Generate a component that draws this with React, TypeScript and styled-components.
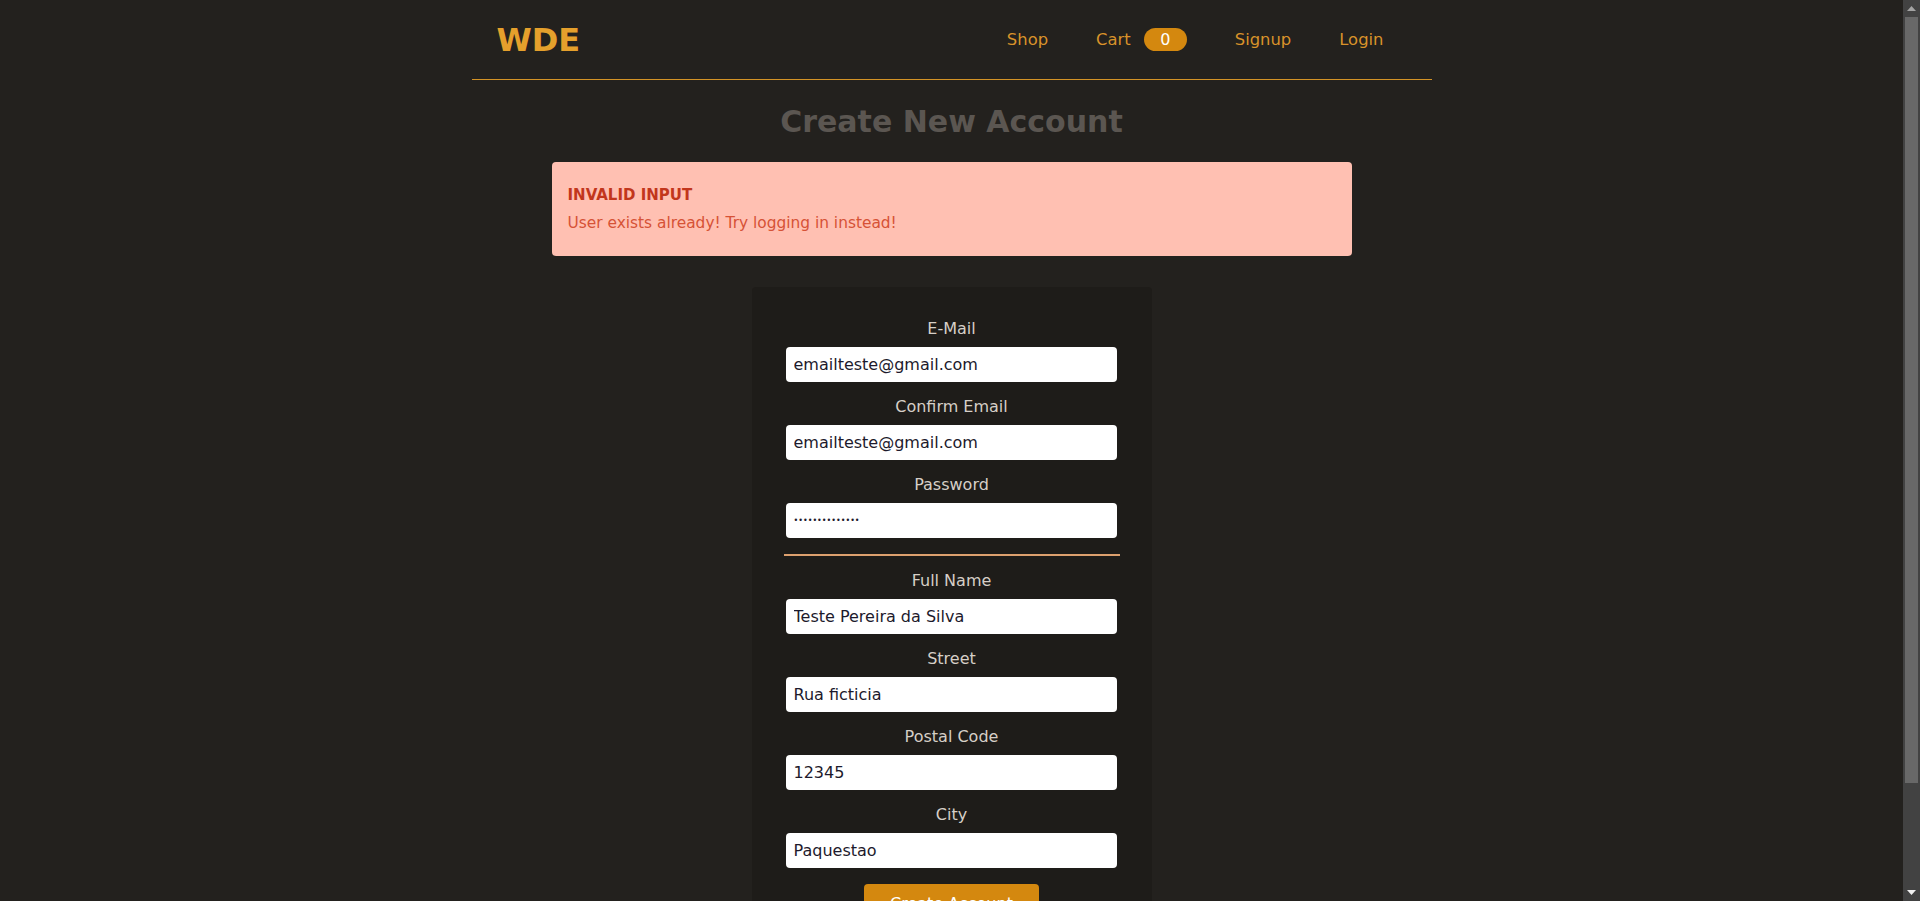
import React from "react";
import styled, { createGlobalStyle } from "styled-components";

const GlobalStyle = createGlobalStyle`
  html, body {
    margin: 0;
    height: 100%;
    overflow: hidden;
    background: #23211e;
  }
  body {
    font-family: "DejaVu Sans", "Liberation Sans", sans-serif;
  }
  #root { height: 100%; }
  * { box-sizing: border-box; }
`;

const Frame = styled.div`
  display: flex;
  height: 100vh;
  background: #23211e;
`;

const Viewport = styled.div`
  flex: 1;
  min-width: 0;
  overflow: hidden;
`;

const ScrollBar = styled.div`
  width: 17px;
  flex: 0 0 17px;
  display: flex;
  flex-direction: column;
  background: #424242;
`;

const ArrowButton = styled.div`
  height: 17px;
  flex: 0 0 17px;
  display: flex;
  align-items: center;
  justify-content: center;
`;

const Track = styled.div`
  flex: 1;
  padding: 0 2px;
`;

const Thumb = styled.div<{ $h: number }>`
  height: ${(p) => p.$h}px;
  background: #686868;
`;

const Page = styled.div`
  width: 960px;
  margin: 0 auto;
  padding-bottom: 73px;
`;

const Header = styled.header`
  height: 80px;
  display: flex;
  align-items: center;
  justify-content: space-between;
  padding: 0 48px 0 25px;
  border-bottom: 1px solid #d39326;
`;

const Logo = styled.a`
  font-size: 32px;
  font-weight: 700;
  color: #e5a02c;
  text-decoration: none;
  line-height: 1;
`;

const NavList = styled.ul`
  list-style: none;
  margin: 0;
  padding: 0;
  display: flex;
  align-items: center;
  gap: 48px;
`;

const NavItem = styled.li`
  display: flex;
  align-items: center;
  gap: 13px;
`;

const NavLink = styled.a`
  font-size: 16.4px;
  color: #d8922a;
  text-decoration: none;
`;

const Badge = styled.span`
  display: inline-flex;
  align-items: center;
  justify-content: center;
  width: 43px;
  height: 23px;
  border-radius: 12px;
  background: #d4880f;
  color: #ffffff;
  font-size: 16px;
`;

const Main = styled.main`
  display: flex;
  flex-direction: column;
  align-items: center;
`;

const Title = styled.h1`
  margin: 24px 0 0;
  font-size: 30px;
  line-height: 36px;
  font-weight: 700;
  color: #5b5651;
`;

const Alert = styled.div`
  width: 800px;
  margin-top: 22px;
  padding: 21px 16px 21px;
  background: #ffc0b2;
  border-radius: 4px;
`;

const AlertTitle = styled.h2`
  margin: 0 0 4px;
  font-size: 15px;
  line-height: 24px;
  font-weight: 700;
  color: #c2361c;
`;

const AlertText = styled.p`
  margin: 0;
  font-size: 15.4px;
  line-height: 24px;
  color: #d65236;
`;

const Form = styled.form`
  width: 400px;
  margin-top: 31px;
  padding: 30px 34px 29px;
  background: #1e1c19;
  border-radius: 4px;
  display: flex;
  flex-direction: column;
  align-items: center;
`;

const Field = styled.div`
  width: 100%;
  display: flex;
  flex-direction: column;
  align-items: stretch;
  margin-bottom: 13px;
`;

const Label = styled.label`
  text-align: center;
  font-size: 16px;
  line-height: 24px;
  margin-bottom: 6px;
  color: #d6cfc7;
`;

const Input = styled.input`
  width: 331px;
  height: 35px;
  padding: 0 8px;
  border: none;
  border-radius: 4px;
  background: #ffffff;
  color: #1d1a2c;
  font-family: "DejaVu Sans", "Liberation Sans", sans-serif;
  font-size: ${(p) => (p.type === "password" ? "8px" : "16px")};
  outline: none;
  color-scheme: light;
`;

const Divider = styled.hr`
  width: 336px;
  margin: 3px 0 13px;
  border: none;
  border-top: 2px solid #dda06e;
`;

const Button = styled.button`
  margin-top: 3px;
  height: 38px;
  padding: 0 26px;
  border: none;
  border-radius: 4px;
  background: #d4880f;
  color: #ffffff;
  font-family: "DejaVu Sans", "Liberation Sans", sans-serif;
  font-size: 16px;
  cursor: pointer;
`;

const fieldsTop = [
  { label: "E-Mail", type: "email", value: "emailteste@gmail.com" },
  { label: "Confirm Email", type: "email", value: "emailteste@gmail.com" },
  { label: "Password", type: "password", value: "12345678901234" },
];

const fieldsBottom = [
  { label: "Full Name", type: "text", value: "Teste Pereira da Silva" },
  { label: "Street", type: "text", value: "Rua ficticia" },
  { label: "Postal Code", type: "text", value: "12345" },
  { label: "City", type: "text", value: "Paquestao" },
];

export default function App() {
  return (
    <>
      <GlobalStyle />
      <Frame>
        <Viewport>
          <Page>
            <Header>
              <Logo href="#">WDE</Logo>
              <nav>
                <NavList>
                  <NavItem>
                    <NavLink href="#">Shop</NavLink>
                  </NavItem>
                  <NavItem>
                    <NavLink href="#">Cart</NavLink>
                    <Badge>0</Badge>
                  </NavItem>
                  <NavItem>
                    <NavLink href="#">Signup</NavLink>
                  </NavItem>
                  <NavItem>
                    <NavLink href="#">Login</NavLink>
                  </NavItem>
                </NavList>
              </nav>
            </Header>
            <Main>
              <Title>Create New Account</Title>
              <Alert>
                <AlertTitle>INVALID INPUT</AlertTitle>
                <AlertText>User exists already! Try logging in instead!</AlertText>
              </Alert>
              <Form onSubmit={(e) => e.preventDefault()}>
                {fieldsTop.map((f) => (
                  <Field key={f.label}>
                    <Label>{f.label}</Label>
                    <Input type={f.type} defaultValue={f.value} />
                  </Field>
                ))}
                <Divider />
                {fieldsBottom.map((f) => (
                  <Field key={f.label}>
                    <Label>{f.label}</Label>
                    <Input type={f.type} defaultValue={f.value} />
                  </Field>
                ))}
                <Button type="submit">Create Account</Button>
              </Form>
            </Main>
          </Page>
        </Viewport>
        <ScrollBar>
          <ArrowButton>
            <svg width="9" height="5" viewBox="0 0 9 5">
              <path d="M0 5 L4.5 0 L9 5 Z" fill="#a3a3a3" />
            </svg>
          </ArrowButton>
          <Track>
            <Thumb $h={766} />
          </Track>
          <ArrowButton>
            <svg width="9" height="5" viewBox="0 0 9 5">
              <path d="M0 0 L4.5 5 L9 0 Z" fill="#f0f0f0" />
            </svg>
          </ArrowButton>
        </ScrollBar>
      </Frame>
    </>
  );
}
